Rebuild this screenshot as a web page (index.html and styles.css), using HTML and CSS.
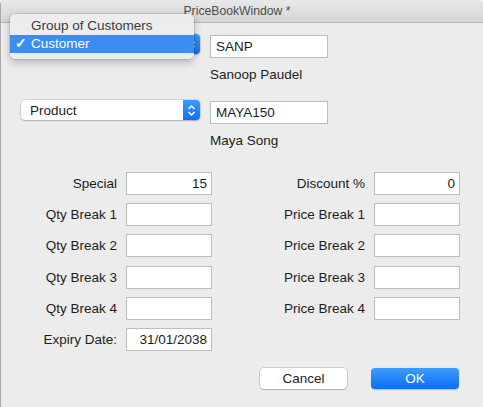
FILE: index.html
```html
<!DOCTYPE html>
<html>
<head>
<meta charset="utf-8">
<link rel="stylesheet" href="styles.css">
</head>
<body>
<div class="window">
  <div class="titlebar"><span class="title">PriceBookWindow *</span></div>
  <div class="content">
    <div class="pick-row first">
      <div class="popup"><span class="popup-label hidden">Customer</span><span class="popup-arrow"><svg width="9" height="13" viewBox="0 0 9 13"><path d="M1.5 5 L4.5 2 L7.5 5 M1.5 8 L4.5 11 L7.5 8" fill="none" stroke="#fff" stroke-width="1.5"/></svg></span></div>
      <div class="pick-right">
        <div class="field left">SANP</div>
        <div class="name">Sanoop Paudel</div>
      </div>
    </div>
    <div class="pick-row second">
      <div class="popup"><span class="popup-label">Product</span><span class="popup-arrow"><svg width="9" height="13" viewBox="0 0 9 13"><path d="M1.5 5 L4.5 2 L7.5 5 M1.5 8 L4.5 11 L7.5 8" fill="none" stroke="#fff" stroke-width="1.5"/></svg></span></div>
      <div class="pick-right">
        <div class="field left">MAYA150</div>
        <div class="name">Maya Song</div>
      </div>
    </div>
    <div class="form">
      <label class="lbl">Special</label><div class="field num">15</div>
      <label class="lbl">Discount %</label><div class="field num">0</div>
      <label class="lbl">Qty Break 1</label><div class="field"></div>
      <label class="lbl">Price Break 1</label><div class="field"></div>
      <label class="lbl">Qty Break 2</label><div class="field"></div>
      <label class="lbl">Price Break 2</label><div class="field"></div>
      <label class="lbl">Qty Break 3</label><div class="field"></div>
      <label class="lbl">Price Break 3</label><div class="field"></div>
      <label class="lbl">Qty Break 4</label><div class="field"></div>
      <label class="lbl">Price Break 4</label><div class="field"></div>
      <label class="lbl">Expiry Date:</label><div class="field num">31/01/2038</div>
    </div>
    <div class="buttons">
      <button class="btn cancel">Cancel</button>
      <button class="btn ok">OK</button>
    </div>
  </div>
  <div class="menu">
    <div class="menu-item">Group of Customers</div>
    <div class="menu-item selected"><span class="check">✓</span>Customer</div>
  </div>
</div>
</body>
</html>
```
FILE: styles.css
```css
* { box-sizing: border-box; }
html, body { margin: 0; padding: 0; }
body {
  width: 483px;
  height: 407px;
  background: #f2f2f2;
  font-family: "Liberation Sans", Arial, sans-serif;
  font-size: 13.5px;
  color: #1d1d1d;
  overflow: hidden;
}
.window {
  position: relative;
  width: 483px;
  height: 407px;
  background: #ececec;
  border-left: 1px solid #a9a9a9;
  border-radius: 5px 5px 0 0;
  overflow: hidden;
}
.titlebar {
  height: 23px;
  background: linear-gradient(#e9e9e9, #d5d5d5);
  border-bottom: 1px solid #b7b7b7;
  display: flex;
  align-items: center;
  justify-content: center;
  padding-right: 10px;
}
.title {
  color: #4c4c4c;
  font-size: 12.2px;
}
.content {
  padding-left: 20px;
}
.pick-row {
  display: flex;
  align-items: flex-start;
  gap: 10px;
}
.pick-row.first { margin-top: 11px; }
.pick-row.second { margin-top: 17px; }
.popup {
  width: 179px;
  height: 20px;
  background: #fff;
  border-radius: 4px;
  box-shadow: 0 0 0 0.5px rgba(0,0,0,0.18), 0 1px 1.5px rgba(0,0,0,0.2);
  display: flex;
  align-items: center;
  justify-content: space-between;
  overflow: hidden;
}
.pick-row .pick-right { margin-top: 1px; }
.popup-label {
  padding-left: 9px;
}
.popup-label.hidden { visibility: hidden; }
.popup-arrow {
  width: 17px;
  height: 20px;
  background: linear-gradient(#3d9cfd, #0f6ff2);
  display: flex;
  align-items: center;
  justify-content: center;
}
.pick-right {
  display: flex;
  flex-direction: column;
}
.field {
  width: 86px;
  height: 23px;
  background: #fff;
  border: 1px solid #bcbcbc;
  line-height: 21px;
  padding: 0 4px;
  white-space: nowrap;
}
.field.left {
  width: 118px;
  padding-left: 5px;
}
.field.num { text-align: right; }
.name {
  margin-top: 9px;
  height: 16px;
  line-height: 16px;
}
.form {
  margin-top: 23px;
  margin-left: -20px;
  display: grid;
  grid-template-columns: 116px 86px 144px 86px;
  column-gap: 9px;
  row-gap: 8.2px;
  grid-auto-rows: 23px;
}
.lbl {
  text-align: right;
  line-height: 23px;
  white-space: nowrap;
}
.buttons {
  display: flex;
  justify-content: flex-end;
  gap: 24px;
  padding-right: 24px;
  margin-top: 17px;
}
.btn {
  height: 21px;
  font-family: "Liberation Sans", Arial, sans-serif;
  font-size: 13.5px;
  border: none;
  border-radius: 4px;
  padding: 0;
}
.cancel {
  width: 87px;
  background: #fff;
  color: #1d1d1d;
  box-shadow: 0 0 0 0.5px rgba(0,0,0,0.25), 0 1px 1px rgba(0,0,0,0.15);
}
.ok {
  width: 88px;
  background: linear-gradient(#3e9dfd, #0b6ff1);
  color: #fff;
  box-shadow: 0 0.5px 1px rgba(0,0,0,0.2);
}
.menu {
  position: absolute;
  left: 9px;
  top: 14px;
  width: 184px;
  height: 45px;
  padding-top: 3px;
  background: rgba(236,236,238,0.97);
  border-radius: 5px;
  box-shadow: 0 0 0 0.5px rgba(0,0,0,0.2), 0 3px 8px rgba(0,0,0,0.25);
}
.menu-item {
  height: 18px;
  line-height: 18px;
  padding-left: 21px;
  color: #3a3a3a;
  position: relative;
}
.menu-item.selected {
  background: #3b8df2;
  color: #fff;
}
.check {
  position: absolute;
  left: 5px;
  top: 0;
  font-weight: 700;
}
```
